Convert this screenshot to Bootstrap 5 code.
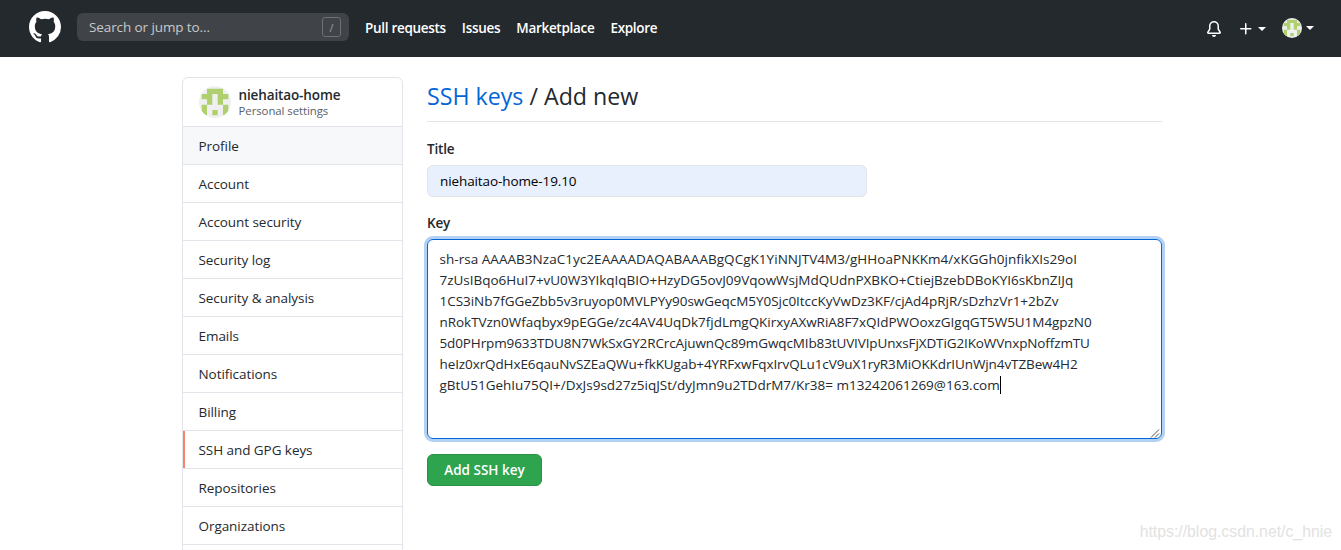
<!DOCTYPE html>
<html lang="en">
  <head>
    <meta charset="UTF-8" />
    <meta name="viewport" content="width=device-width, initial-scale=1.0" />
    <title>Add new SSH key</title>
    <!-- Bootstrap CSS -->
    <link
      href="https://cdn.jsdelivr.net/npm/bootstrap@5.3.0/dist/css/bootstrap.min.css"
      rel="stylesheet"
    />
    <style>
      body {
        font-family: "Open Sans", "Noto Sans", sans-serif;
        font-size: 13.5px;
        line-height: 21px;
        color: #24292e;
        height: 550px;
        overflow: hidden;
      }
      .topbar {
        height: 57px;
        background: #24292e;
        padding: 0 27px 0 29px;
      }
      .search-box {
        width: 272px;
        height: 28px;
        margin: 0 16px;
        padding: 0 8px 0 12px;
        background: #404448;
        border-radius: 6px;
        color: #c8c9cb;
        letter-spacing: -0.1px;
      }
      .search-text {
        padding-top: 2px;
      }
      .slash-key {
        width: 19px;
        height: 20px;
        border: 1px solid #6b7075;
        border-radius: 3px;
        color: #9a9ea3;
        font-size: 11px;
        line-height: 19px;
      }
      .topbar .nav-link {
        padding: 0;
        color: #fff;
        font-weight: 600;
        letter-spacing: -0.3px;
      }
      .caret {
        border: 4px solid transparent;
        border-top-color: #fff;
        border-bottom: 0;
      }
      .user-icon {
        margin-bottom: 2px;
      }
      .page-body {
        width: 980px;
        margin: 20px 0 0 182px;
      }
      .side-menu {
        width: 221px;
        --bs-list-group-border-color: #e1e4e8;
        --bs-list-group-border-radius: 6px;
        --bs-list-group-color: #24292e;
      }
      .side-menu .list-group-item {
        height: 38px;
        padding: 9px 15.5px 7px;
        letter-spacing: -0.06px;
      }
      .side-menu .menu-head {
        height: 50px;
        padding: 0 15.5px;
      }
      .side-menu .menu-tail {
        height: 5px;
        padding: 0;
        border-bottom: 0;
        border-radius: 0;
      }
      .side-menu .hovered {
        background: #f6f8fa;
      }
      .side-menu .current {
        box-shadow: inset 2px 0 0 #f9826c;
      }
      .menu-user {
        line-height: 17px;
        letter-spacing: -0.12px;
      }
      .menu-sub {
        font-size: 11.4px;
        line-height: 14px;
        color: #586069;
      }
      .main-col {
        width: 735px;
      }
      .page-title {
        height: 45px;
        margin-bottom: 17px;
        border-bottom: 1px solid #e1e4e8;
        font-size: 23.2px;
        font-weight: 400;
        line-height: 39px;
      }
      .page-title a {
        color: #0366d6;
      }
      .field-label {
        display: block;
        margin-bottom: 5px;
        font-weight: 600;
        letter-spacing: -0.2px;
      }
      .title-input {
        width: 440px;
        height: 32px;
        padding: 5px 12px;
        background: #e8f0fe;
        border-color: #e1e4e8;
        border-radius: 6px;
        font-size: inherit;
        line-height: 20px;
        letter-spacing: -0.1px;
        color: #000;
      }
      .key-box {
        height: 200px;
        margin-bottom: 15px;
        padding: 9px 11.5px;
        border: 1px solid #0366d6;
        border-radius: 6px;
        box-shadow: 0 0 0 3px rgba(3, 102, 214, 0.3);
        white-space: pre;
      }
      .key-box div:nth-child(1) { letter-spacing: 0.04px; }
      .key-box div:nth-child(2) { letter-spacing: -0.02px; }
      .key-box div:nth-child(3) { letter-spacing: -0.03px; }
      .key-box div:nth-child(4) { letter-spacing: -0.04px; }
      .key-box div:nth-child(5) { letter-spacing: -0.12px; }
      .key-box div:nth-child(6) { letter-spacing: -0.1px; }
      .text-caret {
        display: inline-block;
        width: 1px;
        height: 18px;
        background: #000;
        vertical-align: -4px;
      }
      .grip {
        right: 1px;
        bottom: 0;
      }
      .btn-add {
        width: 115px;
        height: 32px;
        padding: 0;
        background: #2ea44f;
        border: 1px solid #2a9147;
        border-radius: 6px;
        color: #fff;
        font-size: inherit;
        font-weight: 600;
        line-height: 20px;
      }
      .watermark {
        right: 9px;
        bottom: 8px;
        font-family: "Liberation Sans", sans-serif;
        font-size: 15.8px;
        color: #e2e2e2;
      }
    </style>
  </head>
  <body class="bg-white">
    <svg class="d-none">
      <symbol id="identicon" viewBox="0 0 12 12">
        <rect width="12" height="12" fill="#f0f0f0" />
        <path
          d="M3 1h6v2h2v2H9v2H7V3H5v4H3V5H1V3h2zM1 7h2v4H1zM9 7h2v4H9zM5 9h2v2H5z"
          fill="#aed06f"
        />
      </symbol>
    </svg>

    <header class="topbar d-flex align-items-center">
      <a href="#" class="d-flex pb-1">
        <svg width="32" height="32" viewBox="0 0 16 16" fill="#fff">
          <path d="M8 0C3.58 0 0 3.58 0 8c0 3.54 2.29 6.53 5.47 7.59.4.07.55-.17.55-.38 0-.19-.01-.82-.01-1.49-2.01.37-2.53-.49-2.69-.94-.09-.23-.48-.94-.82-1.13-.28-.15-.68-.52-.01-.53.63-.01 1.08.58 1.23.82.72 1.21 1.87.87 2.33.66.07-.52.28-.87.51-1.07-1.78-.2-3.64-.89-3.64-3.95 0-.87.31-1.59.82-2.15-.08-.2-.36-1.02.08-2.12 0 0 .67-.21 2.2.82.64-.18 1.32-.27 2-.27.68 0 1.36.09 2 .27 1.53-1.04 2.2-.82 2.2-.82.44 1.1.16 1.92.08 2.12.51.56.82 1.27.82 2.15 0 3.07-1.87 3.75-3.65 3.95.29.25.54.73.54 1.48 0 1.07-.01 1.93-.01 2.2 0 .21.15.46.55.38A8.013 8.013 0 0016 8c0-4.42-3.58-8-8-8z" />
        </svg>
      </a>
      <div class="search-box d-flex align-items-center justify-content-between mb-1">
        <span class="search-text">Search or jump to...</span>
        <span class="slash-key text-center">/</span>
      </div>
      <nav class="nav gap-3">
        <a class="nav-link" href="#">Pull requests</a>
        <a class="nav-link" href="#">Issues</a>
        <a class="nav-link" href="#">Marketplace</a>
        <a class="nav-link" href="#">Explore</a>
      </nav>
      <div class="d-flex align-items-center ms-auto">
        <svg class="me-3" width="16" height="16" viewBox="0 0 16 16" fill="#fff">
          <path d="M8 16a2 2 0 001.985-1.75c.017-.137-.097-.25-.235-.25h-3.5c-.138 0-.252.113-.235.25A2 2 0 008 16z" />
          <path fill-rule="evenodd" d="M8 1.5A3.5 3.5 0 004.5 5v2.947c0 .346-.102.683-.294.97l-1.703 2.556a.018.018 0 00-.003.01l.001.006c0 .002.002.004.004.006a.017.017 0 00.006.004l.007.001h10.964l.007-.001a.016.016 0 00.006-.004.016.016 0 00.004-.006l.001-.007a.017.017 0 00-.003-.01l-1.703-2.554a1.75 1.75 0 01-.294-.97V5A3.5 3.5 0 008 1.5zM3 5a5 5 0 0110 0v2.947c0 .05.015.098.042.139l1.703 2.555A1.518 1.518 0 0113.482 13H2.518a1.518 1.518 0 01-1.263-2.36l1.703-2.554A.25.25 0 003 7.947V5z" />
        </svg>
        <svg class="me-1" width="16" height="16" viewBox="0 0 16 16" fill="#fff">
          <path d="M7.75 2a.75.75 0 01.75.75V7h4.25a.75.75 0 110 1.5H8.5v4.25a.75.75 0 11-1.5 0V8.5H2.75a.75.75 0 010-1.5H7V2.75A.75.75 0 017.75 2z" />
        </svg>
        <span class="caret me-3"></span>
        <svg class="user-icon rounded-circle me-1" width="20" height="20"><use href="#identicon" /></svg>
        <span class="caret user-icon"></span>
      </div>
    </header>

    <div class="page-body d-flex justify-content-between align-items-start">
      <div class="side-menu list-group">
        <div class="list-group-item menu-head d-flex align-items-center">
          <svg class="rounded-circle me-2" width="32" height="32"><use href="#identicon" /></svg>
          <div>
            <div class="menu-user fw-semibold">niehaitao-home</div>
            <div class="menu-sub">Personal settings</div>
          </div>
        </div>
        <a href="#" class="list-group-item hovered">Profile</a>
        <a href="#" class="list-group-item">Account</a>
        <a href="#" class="list-group-item">Account security</a>
        <a href="#" class="list-group-item">Security log</a>
        <a href="#" class="list-group-item">Security &amp; analysis</a>
        <a href="#" class="list-group-item">Emails</a>
        <a href="#" class="list-group-item">Notifications</a>
        <a href="#" class="list-group-item">Billing</a>
        <a href="#" class="list-group-item current">SSH and GPG keys</a>
        <a href="#" class="list-group-item">Repositories</a>
        <a href="#" class="list-group-item">Organizations</a>
        <div class="list-group-item menu-tail"></div>
      </div>

      <main class="main-col">
        <h2 class="page-title"><a href="#" class="text-decoration-none">SSH keys</a> / Add new</h2>
        <form>
          <label class="field-label" for="title">Title</label>
          <input type="text" id="title" class="form-control title-input mb-3" value="niehaitao-home-19.10" />
          <label class="field-label">Key</label>
          <div class="key-box position-relative"><div>sh-rsa AAAAB3NzaC1yc2EAAAADAQABAAABgQCgK1YiNNJTV4M3/gHHoaPNKKm4/xKGGh0jnfikXIs29oI</div><div>7zUsIBqo6HuI7+vU0W3YIkqIqBIO+HzyDG5ovJ09VqowWsjMdQUdnPXBKO+CtiejBzebDBoKYI6sKbnZIJq</div><div>1CS3iNb7fGGeZbb5v3ruyop0MVLPYy90swGeqcM5Y0Sjc0ItccKyVwDz3KF/cjAd4pRjR/sDzhzVr1+2bZv</div><div>nRokTVzn0Wfaqbyx9pEGGe/zc4AV4UqDk7fjdLmgQKirxyAXwRiA8F7xQIdPWOoxzGIgqGT5W5U1M4gpzN0</div><div>5d0PHrpm9633TDU8N7WkSxGY2RCrcAjuwnQc89mGwqcMIb83tUVIVIpUnxsFjXDTiG2IKoWVnxpNoffzmTU</div><div>heIz0xrQdHxE6qauNvSZEaQWu+fkKUgab+4YRFxwFqxIrvQLu1cV9uX1ryR3MiOKKdrIUnWjn4vTZBew4H2</div><div>gBtU51GehIu75QI+/DxJs9sd27z5iqJSt/dyJmn9u2TDdrM7/Kr38= m13242061269@163.com<span class="text-caret"></span></div><svg class="grip position-absolute" width="10" height="10" stroke="#555"><path d="M1 9.500l8-8M5 9.500l4-4" fill="none" /></svg></div>
          <button type="button" class="btn btn-add">Add SSH key</button>
        </form>
      </main>
    </div>

    <div class="watermark position-absolute">https://blog.csdn.net/c_hnie</div>

    <!-- Bootstrap JS -->
    <script src="https://cdn.jsdelivr.net/npm/bootstrap@5.3.0/dist/js/bootstrap.bundle.min.js"></script>
  </body>
</html>
